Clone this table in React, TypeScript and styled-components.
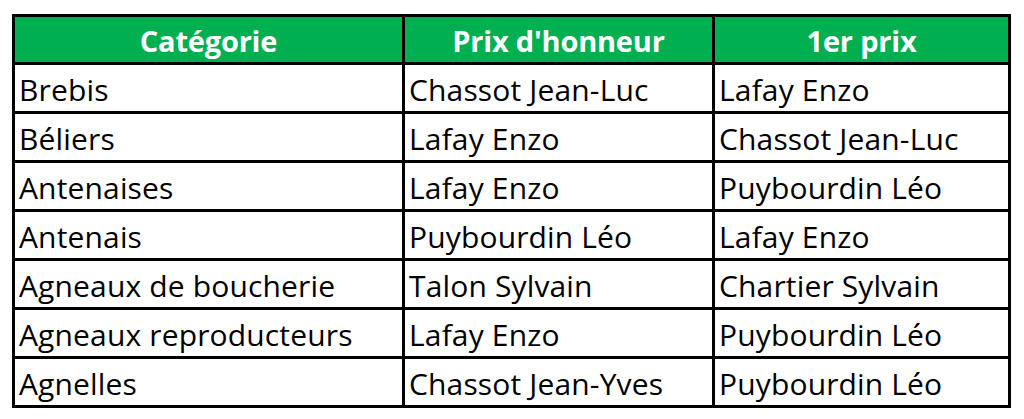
import React from "react";
import styled, { createGlobalStyle } from "styled-components";

const Global = createGlobalStyle`
  html, body { margin: 0; padding: 0; background: #ffffff; }
  body { font-family: "Open Sans", "Noto Sans", sans-serif; }
`;

const Page = styled.div`
  padding: 14px 0 0 12px;
`;

const Table = styled.table`
  border-collapse: collapse;
  width: 996px;
  table-layout: fixed;
`;

const Col = styled.col<{ $w: number }>`
  width: ${(p) => p.$w}px;
`;

const HeadCell = styled.th`
  height: 43px;
  background: #00b050;
  color: #ffffff;
  border: 3px solid #000000;
  font-family: "Open Sans", "Noto Sans", sans-serif;
  font-weight: 700;
  font-size: 29px;
  letter-spacing: -0.2px;
  text-align: center;
  vertical-align: middle;
  padding: 2px 0 0 0;
  line-height: 1;
`;

const Cell = styled.td`
  height: 43px;
  border: 3px solid #000000;
  color: #000000;
  font-family: "Open Sans", "Noto Sans", sans-serif;
  font-size: 30px;
  letter-spacing: 0.15px;
  text-align: left;
  vertical-align: middle;
  padding: 3px 0 0 4px;
  line-height: 1;
  white-space: nowrap;
`;

const rows: [string, string, string][] = [
  ["Brebis", "Chassot Jean-Luc", "Lafay Enzo"],
  ["Béliers", "Lafay Enzo", "Chassot Jean-Luc"],
  ["Antenaises", "Lafay Enzo", "Puybourdin Léo"],
  ["Antenais", "Puybourdin Léo", "Lafay Enzo"],
  ["Agneaux de boucherie", "Talon Sylvain", "Chartier Sylvain"],
  ["Agneaux reproducteurs", "Lafay Enzo", "Puybourdin Léo"],
  ["Agnelles", "Chassot Jean-Yves", "Puybourdin Léo"],
];

export default function App() {
  return (
    <>
      <Global />
      <Page>
        <Table>
          <colgroup>
            <Col $w={390} />
            <Col $w={310} />
            <Col $w={296} />
          </colgroup>
          <thead>
            <tr>
              <HeadCell>Catégorie</HeadCell>
              <HeadCell>Prix d'honneur</HeadCell>
              <HeadCell>1er prix</HeadCell>
            </tr>
          </thead>
          <tbody>
            {rows.map((r) => (
              <tr key={r[0]}>
                <Cell>{r[0]}</Cell>
                <Cell>{r[1]}</Cell>
                <Cell>{r[2]}</Cell>
              </tr>
            ))}
          </tbody>
        </Table>
      </Page>
    </>
  );
}
